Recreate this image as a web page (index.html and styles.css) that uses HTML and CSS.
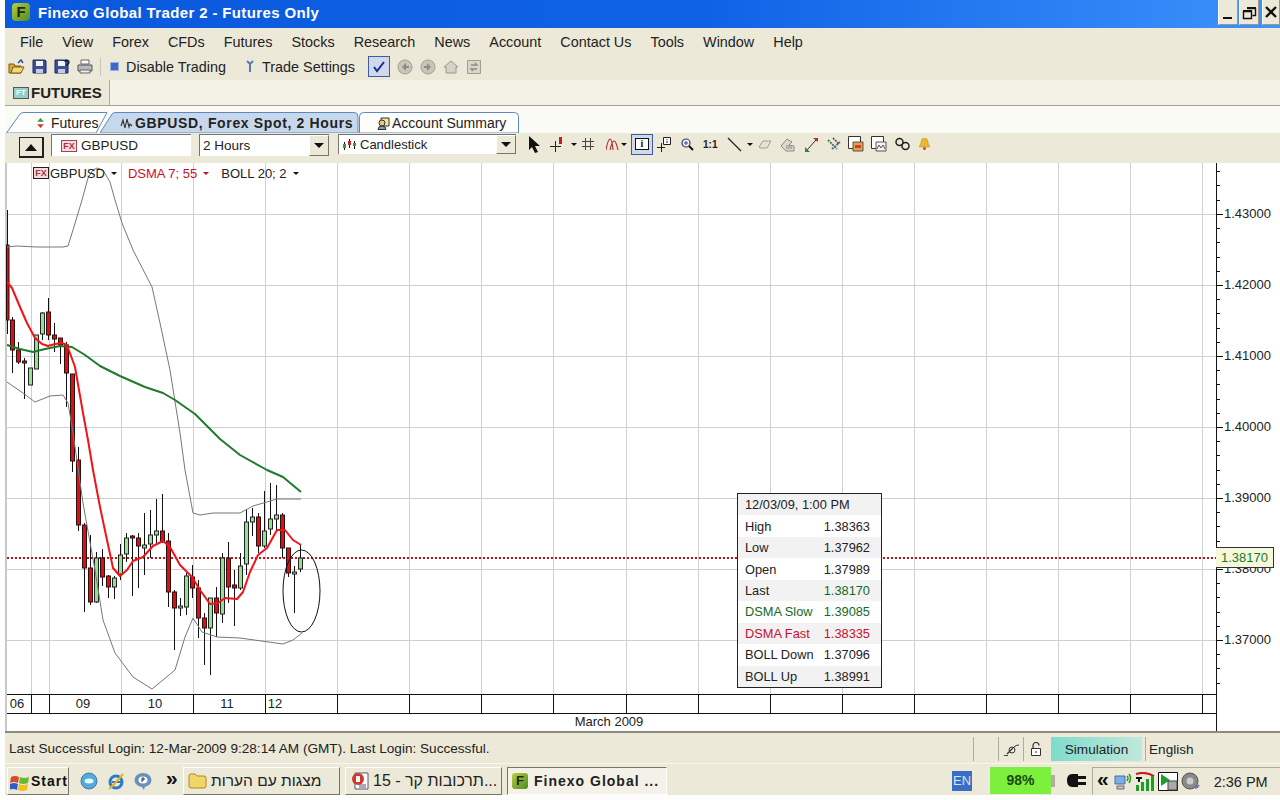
FILE: index.html
```html
<!DOCTYPE html>
<html lang="en">
<head>
<meta charset="utf-8">
<title>Finexo Global Trader 2 - Futures Only</title>
<link rel="stylesheet" href="styles.css">
</head>
<body>
<header class="titlebar">
  <span class="logo">F</span>
  <span class="title-text">Finexo Global Trader 2 - Futures Only</span>
  <div class="winbtns">
    <span class="winbtn"><svg width="20" height="24" viewBox="0 0 20 24"><path d="M5 18h9" stroke="#111" stroke-width="2"/></svg></span>
    <span class="winbtn"><svg width="20" height="24" viewBox="0 0 20 24"><path d="M8.500 8.500h8v7h-3M4.500 11.500h8v7h-8z" fill="none" stroke="#111" stroke-width="1.400"/><path d="M8 8h9M4 11h9" stroke="#111" stroke-width="2"/></svg></span>
    <span class="winbtn winbtn-x"><svg width="20" height="24" viewBox="0 0 20 24"><path d="M5 7l10 10M15 7L5 17" stroke="#111" stroke-width="2.400"/></svg></span>
  </div>
</header>

<nav class="menubar">
  <span>File</span><span>View</span><span>Forex</span><span>CFDs</span><span>Futures</span><span>Stocks</span><span>Research</span><span>News</span><span>Account</span><span>Contact Us</span><span>Tools</span><span>Window</span><span>Help</span>
</nav>

<div class="toolbar">
  <svg class="ti" width="17" height="16" viewBox="0 0 17 16"><path d="M1 5h5l1 2h6v7H1z" fill="#d9a93a" stroke="#7a5a10"/><path d="M3 14l2-6h11l-3 6z" fill="#f5d878" stroke="#7a5a10"/><path d="M10 4l3-3 2 3" fill="none" stroke="#2a4a9a" stroke-width="1.500"/></svg>
  <svg class="ti" width="15" height="15" viewBox="0 0 15 15"><path d="M1 1h12l1 1v12H1z" fill="#3c4f9e" stroke="#1e2a66"/><path d="M4 2h7v5H4z" fill="#f4f4f4"/><path d="M4 10h7v4H4z" fill="#c8ccd8"/></svg>
  <svg class="ti" width="16" height="15" viewBox="0 0 16 15"><path d="M1 1h12l1 1v12H1z" fill="#3c4f9e" stroke="#1e2a66"/><path d="M4 2h7v5H4z" fill="#f4f4f4"/><path d="M4 10h7v4H4z" fill="#c8ccd8"/><path d="M11 3a2 2 0 1 1 3 2l-1 1v1" fill="none" stroke="#111" stroke-width="1.300"/></svg>
  <svg class="ti" width="16" height="15" viewBox="0 0 16 15"><path d="M4 1h8v4H4z" fill="#fff" stroke="#666"/><path d="M1 6h14v6H1z" fill="#b8b8c0" stroke="#555"/><path d="M3 11h10v3H3z" fill="#eee" stroke="#666"/></svg>
  <span class="tsep"></span>
  <span class="bluesq"></span>
  <span class="tlabel">Disable Trading</span>
  <svg class="ti-key" width="10" height="15" viewBox="0 0 10 15"><path d="M2 2l3 3 3-3M5 5v8" fill="none" stroke="#5a7ab0" stroke-width="2"/></svg>
  <span class="tlabel">Trade Settings</span>
  <span class="checkbtn"><svg width="14" height="13" viewBox="0 0 14 13"><path d="M2 7l3 4 7-9" fill="none" stroke="#1a2a9a" stroke-width="2"/></svg></span>
  <span class="navicons">
    <svg width="16" height="16" viewBox="0 0 16 16"><circle cx="8" cy="8" r="7" fill="#c8c6ba" stroke="#a09e92"/><path d="M9 4L5 8l4 4zM9 7h3v2H9z" fill="#8e8c82"/></svg>
    <svg width="16" height="16" viewBox="0 0 16 16"><circle cx="8" cy="8" r="7" fill="#c8c6ba" stroke="#a09e92"/><path d="M7 4l4 4-4 4zM7 7H4v2h3z" fill="#8e8c82"/></svg>
    <svg width="16" height="16" viewBox="0 0 16 16"><path d="M1 8l7-6 7 6h-2v6H3V8z" fill="#d4d2c6" stroke="#9a988c"/></svg>
    <svg width="16" height="16" viewBox="0 0 16 16"><path d="M1.500 1.500h13v13h-13z" fill="#d8d6ca" stroke="#a09e92"/><path d="M5 6h6l-2-2M11 10H5l2 2" fill="none" stroke="#8e8c82" stroke-width="1.300"/></svg>
  </span>
</div>

<div class="workband">
  <div class="worktab"><span class="ft">FT</span>FUTURES</div>
</div>

<div class="tabs">
  <div class="tab tab-futures">
    <svg class="tabshape" width="102" height="21" viewBox="0 0 102 21"><path d="M0.500 21L14 2q1.500-1.500 4-1.500h83L90 21z" fill="#fdfdfb" stroke="#5a8ac0"/></svg>
    <svg class="tabicon" width="9" height="12" viewBox="0 0 11 12"><path d="M5.500 0l4 4.500h-8z" fill="#2c9a3a"/><path d="M5.500 12l4-4.500h-8z" fill="#d03030"/></svg>
    <span>Futures</span>
  </div>
  <div class="tab tab-active">
    <svg class="tabshape" width="259" height="21" viewBox="0 0 259 21"><path d="M0 21L12 2q1-1.500 4-1.500h238q4 0 4 4V21z" fill="#c8d8ec" stroke="#5a8ac0"/></svg>
    <svg class="tabicon" width="13" height="12" viewBox="0 0 13 12"><path d="M1 9l2-6 2 8 2-9 2 8 1-3 2 2" fill="none" stroke="#333" stroke-width="1.100"/></svg>
    <span>GBPUSD, Forex Spot, 2 Hours</span>
  </div>
  <div class="tab tab-account">
    <svg class="tabshape" width="161" height="21" viewBox="0 0 161 21"><path d="M0.500 21V4.500q0-4 4-4h151q4 0 4 4V21z" fill="#fdfdfb" stroke="#5a8ac0"/></svg>
    <svg class="tabicon" width="13" height="14" viewBox="0 0 13 14"><path d="M4 2h8v8H4z" fill="#f4e4a0" stroke="#333"/><circle cx="5" cy="7" r="3" fill="#e8c880" stroke="#333"/><path d="M1 13.500q0-3.500 4-3.500t4 3.500z" fill="#8898c0" stroke="#333"/></svg>
    <span>Account Summary</span>
  </div>
</div>

<div class="charttools">
  <span class="upbtn"><svg width="12" height="7" viewBox="0 0 12 7"><path d="M6 0l6 7H0z" fill="#111"/></svg></span>
  <div class="field field-symbol"><span class="fx">FX</span><span>GBPUSD</span></div>
  <div class="field field-period"><span>2 Hours</span><span class="comboarrow"><svg width="10" height="5" viewBox="0 0 10 5"><path d="M0 0h10L5 5z" fill="#111"/></svg></span></div>
  <div class="field field-type">
    <svg class="typeicon" width="15" height="14" viewBox="0 0 15 14"><path d="M2.500 4v8M7.500 1v9M12.500 3v8" stroke="#111"/><path d="M1 6h3v4H1z" fill="#3a9a3a"/><path d="M6 3h3v4H6z" fill="#d02020"/><path d="M11 5h3v3h-3z" fill="#3a9a3a"/></svg>
    <span>Candlestick</span>
    <span class="comboarrow"><svg width="10" height="5" viewBox="0 0 10 5"><path d="M0 0h10L5 5z" fill="#111"/></svg></span>
  </div>
  <div class="charticons">
    <svg class="ci-arrow" width="13" height="17" viewBox="0 0 13 17"><path d="M1 0v14l3-3 3 6 3-1-3-6h5z" fill="#111"/></svg>
    <svg class="ci-cross" width="17" height="17" viewBox="0 0 17 17"><path d="M0 10.500h11M5.500 5v11" stroke="#222"/><path d="M9 1h3v7H9z" fill="#c02020"/></svg>
    <svg class="ci-drop" width="6" height="3" viewBox="0 0 6 3"><path d="M0 0h6L3 3z" fill="#111"/></svg>
    <svg class="ci-grid" width="12" height="12" viewBox="0 0 12 12"><path d="M3.500 0v12M8.500 0v12M0 3.500h12M0 8.500h12" stroke="#444"/></svg>
    <svg class="ci-wave" width="13" height="13" viewBox="0 0 13 13"><path d="M0 12Q2 1 4 1t3 11M4 12Q6 3 8 3t4 9" fill="none" stroke="#b02828" stroke-width="1.100"/></svg>
    <svg class="ci-drop" width="6" height="3" viewBox="0 0 6 3"><path d="M0 0h6L3 3z" fill="#111"/></svg>
    <span class="infobtn"><span class="infobox">i</span></span>
    <svg class="ci-plusinfo" width="14" height="15" viewBox="0 0 14 15"><path d="M0 10.500h8M4.500 6v9" stroke="#222"/><path d="M6.500.500h7v7h-7z" fill="#fff" stroke="#222"/><path d="M9.500 2h1v1h-1zM9.500 4h1v2h-1z" fill="#222"/></svg>
    <svg class="ci-zoom" width="13" height="13" viewBox="0 0 13 13"><circle cx="5" cy="5" r="4" fill="#eef" stroke="#444" stroke-width="1.200"/><path d="M8 8l4 4" stroke="#111" stroke-width="2"/><path d="M3 5h4M5 3v4" stroke="#2a4ab0"/></svg>
    <span class="ci-ratio">1:1</span>
    <svg class="ci-line" width="15" height="15" viewBox="0 0 15 15"><path d="M1 1l13 13" stroke="#222" stroke-width="1.200"/></svg>
    <svg class="ci-drop" width="6" height="3" viewBox="0 0 6 3"><path d="M0 0h6L3 3z" fill="#111"/></svg>
    <svg class="ci-erase" width="14" height="11" viewBox="0 0 14 11"><path d="M1 8l4-6h8L9 9H2z" fill="#e6e4d8" stroke="#a09e92"/></svg>
    <svg class="ci-grey" width="16" height="15" viewBox="0 0 16 15"><path d="M1 9l6-7 5 3-3 3 5 1v5H6z" fill="#dcdace" stroke="#8e8c82"/><path d="M6 9h6M6 11h6" stroke="#8e8c82"/></svg>
    <svg class="ci-arrows" width="13" height="15" viewBox="0 0 13 15"><path d="M2 13L11 3" stroke="#333"/><path d="M8 1h5v4z" fill="#c02020"/><path d="M0 10v5h5z" fill="#2a8a3a"/></svg>
    <svg class="ci-dash" width="14" height="14" viewBox="0 0 14 14"><path d="M1 3l9 9" stroke="#2a8a3a" stroke-width="2" stroke-dasharray="2 1"/><path d="M5 12l8-7" stroke="#7a5a90" stroke-width="2" stroke-dasharray="2 1"/><path d="M6 1l6 6" stroke="#444" stroke-width="1.500" stroke-dasharray="2 1"/></svg>
    <svg class="ci-win" width="16" height="16" viewBox="0 0 16 16"><path d="M.500.500h12v12H.500z" fill="#fff" stroke="#333"/><path d="M5 6h10v9H5z" fill="#e8a040" stroke="#555"/><path d="M7 9h6v3H7z" fill="#d04030"/></svg>
    <svg class="ci-win" width="16" height="16" viewBox="0 0 16 16"><path d="M.500.500h12v12H.500z" fill="#fff" stroke="#333"/><path d="M5 6h10v9H5z" fill="#f4f4f0" stroke="#555"/><path d="M6 13l2-4 2 3 2-3 2 4" fill="none" stroke="#555"/></svg>
    <svg class="ci-links" width="15" height="14" viewBox="0 0 15 14"><circle cx="4.500" cy="5" r="3.500" fill="none" stroke="#222" stroke-width="1.500"/><circle cx="10.500" cy="9" r="3.500" fill="none" stroke="#222" stroke-width="1.500"/></svg>
    <svg class="ci-bell" width="11" height="12" viewBox="0 0 11 12"><path d="M5.500 0q3.500 0 3.500 5l2 4H0l2-4q0-5 3.500-5z" fill="#e8b830" stroke="#b08820" stroke-width=".5"/><circle cx="5.500" cy="10.500" r="1.500" fill="#c05020"/></svg>
  </div>
</div>

<main class="chart">
  <svg class="plot" width="1280" height="568" viewBox="0 163 1280 568">
    <path class="grid" d="M31.500 163V694M49.500 163V694M121.500 163V694M193.500 163V694M265.500 163V694M337.500 163V694M409.500 163V694M481.500 163V694M553.500 163V694M626.500 163V694M698.500 163V694M770.500 163V694M842.500 163V694M914.500 163V694M986.500 163V694M1058.500 163V694M1130.500 163V694M1202.500 163V694"/>
    <path class="grid" d="M7 214.500H1216M7 285.500H1216M7 356.500H1216M7 427.500H1216M7 498.500H1216M7 569.500H1216M7 640.500H1216"/>
    <path class="edge" d="M6 163V731"/>
    <path class="dotted" d="M7 558H1216"/>

    <path class="wick" d="M7.500 210V334M12.500 317V373M18.500 342V364M24.500 358V399M42.500 312V340M48.500 298V340M54.500 323V352M60.500 338V364M66.500 342V407M72.500 374V472M78.500 447V531M84.500 523V612M90.500 535V605M96.500 552V603M102.500 549V586M108.500 575V598M114.500 576V599M120.500 544V580M126.500 533V562M132.500 535V596M138.500 533V588M144.500 513V575M150.500 510V558M156.500 499V543M162.500 494V543M168.500 533V607M174.500 590V650M180.500 598V616M186.500 573V615M192.500 565V598M198.500 580V638M204.500 613V665M210.500 598V675M216.500 587V637M222.500 553V623M228.500 542V603M234.500 570V626M240.500 553V590M246.500 510V575M252.500 508V536M258.500 513V553M264.500 491V548M270.500 483V535M276.500 485V531M282.500 513V558M288.500 548V577M294.500 566V613M300.500 544V572"/>
    <g class="candle-r">
      <rect x="6.500" y="245" width="2.500" height="75"/><rect x="10.500" y="320" width="4" height="30"/><rect x="16.500" y="350" width="4" height="12"/><rect x="22.500" y="361" width="4" height="2"/><rect x="46.500" y="312" width="4" height="23"/><rect x="52.500" y="335" width="4" height="4"/><rect x="58.500" y="338" width="4" height="7"/><rect x="64.500" y="345" width="4" height="28"/><rect x="70.500" y="374" width="4" height="87"/><rect x="76.500" y="460" width="4" height="65"/><rect x="82.500" y="525" width="4" height="43"/><rect x="88.500" y="568" width="4" height="34"/><rect x="100.500" y="558" width="4" height="19"/><rect x="106.500" y="576" width="4" height="11"/><rect x="130.500" y="536" width="4" height="2"/><rect x="136.500" y="538" width="4" height="8"/><rect x="160.500" y="531" width="4" height="11"/><rect x="166.500" y="541" width="4" height="51"/><rect x="172.500" y="592" width="4" height="16"/><rect x="190.500" y="577" width="4" height="11"/><rect x="196.500" y="588" width="4" height="30"/><rect x="202.500" y="618" width="4" height="10"/><rect x="214.500" y="598" width="4" height="15"/><rect x="226.500" y="558" width="4" height="29"/><rect x="232.500" y="585" width="4" height="3"/><rect x="256.500" y="517" width="4" height="29"/><rect x="280.500" y="515" width="4" height="33"/><rect x="286.500" y="548" width="4" height="25"/>
    </g>
    <g class="candle-g">
      <rect x="28.500" y="368" width="4" height="17"/><rect x="34.500" y="335" width="4" height="34"/><rect x="40.500" y="313" width="4" height="21"/><rect x="94.500" y="558" width="4" height="44"/><rect x="112.500" y="578" width="4" height="9"/><rect x="118.500" y="555" width="4" height="19"/><rect x="124.500" y="538" width="4" height="16"/><rect x="142.500" y="545" width="4" height="3"/><rect x="148.500" y="535" width="4" height="9"/><rect x="154.500" y="531" width="4" height="4"/><rect x="178.500" y="606" width="4" height="2"/><rect x="184.500" y="576" width="4" height="31"/><rect x="208.500" y="598" width="4" height="30"/><rect x="220.500" y="558" width="4" height="56"/><rect x="238.500" y="566" width="4" height="22"/><rect x="244.500" y="522" width="4" height="42"/><rect x="250.500" y="517" width="4" height="5"/><rect x="262.500" y="531" width="4" height="15"/><rect x="268.500" y="519" width="4" height="10"/><rect x="274.500" y="515" width="4" height="4"/><rect x="292.500" y="572" width="4" height="2"/><rect x="298.500" y="558" width="4" height="11"/>
    </g>

    <polyline class="boll" points="7,247 17,246 37,247 63,247 68,246 73,230 82,200 88,178 93,170 97,168 103,170 110,182 115,200 122,223 133,250 152,287 160,323 170,370 180,433 185,470 193,513 200,515 213,513 240,513 253,506 277,499 301,499"/>
    <polyline class="boll" points="7,382 23,393 35,402 50,396 63,395 68,403 73,433 83,503 95,570 103,620 115,653 133,677 152,689 163,680 175,670 185,637 193,618 202,632 217,637 240,638 283,644 293,640 302,633"/>
    <polyline class="dsma-slow" points="7,345 20,349 33,352 45,349 60,346 72,347 85,355 100,366 120,376 145,387 163,393 175,400 195,414 220,439 240,455 267,470 283,477 301,492"/>
    <polyline class="dsma-fast" points="7,282 12,288 20,307 27,323 35,338 42,344 48,346 55,344 62,343 67,345 75,367 83,413 88,440 93,470 100,507 107,540 113,568 120,576 127,570 133,561 143,557 153,546 163,541 170,547 180,565 192,577 200,590 210,604 218,603 225,598 237,599 243,592 250,572 258,555 267,548 277,530 285,530 293,540 301,545"/>
    <ellipse class="circle" cx="301.500" cy="591" rx="18.500" ry="41"/>

    <path class="axis" d="M7 694.500H1216M7 713.500H1216M1216.500 163V731M31.500 694V713M49.500 694V713M121.500 694V713M193.500 694V713M265.500 694V713M337.500 694V713M409.500 694V713M481.500 694V713M553.500 694V713M626.500 694V713M698.500 694V713M770.500 694V713M842.500 694V713M914.500 694V713M986.500 694V713M1058.500 694V713M1130.500 694V713M1202.500 694V713"/>
    <path class="axis" d="M1216 171.500h4M1216 185.500h4M1216 200.500h4M1216 214.500h7M1216 228.500h4M1216 242.500h4M1216 257.500h4M1216 271.500h4M1216 285.500h7M1216 299.500h4M1216 313.500h4M1216 328.500h4M1216 342.500h4M1216 356.500h7M1216 370.500h4M1216 384.500h4M1216 399.500h4M1216 413.500h4M1216 427.500h7M1216 441.500h4M1216 455.500h4M1216 470.500h4M1216 484.500h4M1216 498.500h7M1216 512.500h4M1216 526.500h4M1216 541.500h4M1216 555.500h4M1216 569.500h7M1216 583.500h4M1216 597.500h4M1216 612.500h4M1216 626.500h4M1216 640.500h7M1216 654.500h4M1216 668.500h4M1216 683.500h4"/>

    <g class="ylabels">
      <text x="1224" y="218">1.43000</text><text x="1224" y="289">1.42000</text><text x="1224" y="360">1.41000</text><text x="1224" y="431">1.40000</text><text x="1224" y="502">1.39000</text><text x="1224" y="573">1.38000</text><text x="1224" y="644">1.37000</text>
    </g>
    <g class="xlabels">
      <text x="17" y="708">06</text><text x="83" y="708">09</text><text x="155" y="708">10</text><text x="227" y="708">11</text><text x="275" y="708">12</text><text x="609" y="726">March 2009</text>
    </g>
  </svg>

  <div class="legend">
    <span class="fx fx-legend">FX</span><span class="lg-sym">GBPUSD</span><i class="drop"></i>
    <span class="lg-red">DSMA 7; 55</span><i class="drop drop-red"></i>
    <span class="lg-boll">BOLL 20; 2</span><i class="drop"></i>
  </div>

  <div class="pricetag">1.38170</div>

  <div class="tip">
    <div class="tip-row"><span>12/03/09, 1:00 PM</span></div>
    <div class="tip-row"><span>High</span><span>1.38363</span></div>
    <div class="tip-row"><span>Low</span><span>1.37962</span></div>
    <div class="tip-row"><span>Open</span><span>1.37989</span></div>
    <div class="tip-row"><span>Last</span><span class="tip-green">1.38170</span></div>
    <div class="tip-row tip-green"><span>DSMA Slow</span><span>1.39085</span></div>
    <div class="tip-row tip-red"><span>DSMA Fast</span><span>1.38335</span></div>
    <div class="tip-row"><span>BOLL Down</span><span>1.37096</span></div>
    <div class="tip-row"><span>BOLL Up</span><span>1.38991</span></div>
  </div>
</main>

<footer class="statusbar">
  <span class="status-msg">Last Successful Login: 12-Mar-2009 9:28:14 AM (GMT). Last Login: Successful.</span>
  <span class="st-cell st-empty"></span>
  <span class="st-cell"><svg width="17" height="13" viewBox="0 0 17 13"><path d="M1 12.500h4" stroke="#444"/><path d="M4 11l6-6" stroke="#333" stroke-width="1.200"/><circle cx="9" cy="7" r="3" fill="none" stroke="#333"/><path d="M11 4q2-2 5-2" fill="none" stroke="#333"/></svg></span>
  <span class="st-cell"><svg width="12" height="14" viewBox="0 0 12 14"><path d="M1.500 6.500h9v7h-9z" fill="#fff" stroke="#333"/><path d="M3 6V3.500a3 3 0 0 1 6 0" fill="none" stroke="#333" stroke-width="1.200"/><path d="M5.500 9h1v2h-1z" fill="#333"/></svg></span>
  <span class="sim">Simulation</span>
  <span class="lang">English</span>
</footer>

<div class="taskbar">
  <span class="start">
    <svg width="20" height="19" viewBox="0 0 20 19"><path d="M1 5q4-2 8 0l-1 6q-4-2-8 0z" fill="#d8482a"/><path d="M10 5q4 2 9 0l-1 6q-5 2-9 0z" fill="#6ab82e"/><path d="M0 12q4-2 8 0l-1 6q-4-2-8 0z" fill="#2a5fc8"/><path d="M9 12q4 2 9 0l-1 6q-5 2-9 0z" fill="#f2c01e"/></svg>
    <span>Start</span>
  </span>
  <span class="quick">
    <svg width="18" height="18" viewBox="0 0 18 18"><circle cx="9" cy="9" r="8" fill="#58a8d8" stroke="#3a80b0"/><ellipse cx="9" cy="9" rx="4.500" ry="2.500" fill="#dff"/></svg>
    <svg width="18" height="19" viewBox="0 0 18 19"><circle cx="9" cy="10" r="6" fill="none" stroke="#2a7ad0" stroke-width="3"/><path d="M5 10h9" stroke="#2a7ad0" stroke-width="2"/><path d="M2 17Q6 14 16 2" fill="none" stroke="#e8b020" stroke-width="2"/></svg>
    <svg width="18" height="18" viewBox="0 0 18 18"><ellipse cx="9" cy="8" rx="8.500" ry="7" fill="#6a90c0"/><ellipse cx="9" cy="8" rx="4.500" ry="3.500" fill="#fff"/><path d="M7 14l3 4 1-4z" fill="#6a90c0"/><path d="M8 6v4M8 6h2v2H8" fill="none" stroke="#334"/></svg>
    <span class="chev">»</span>
  </span>
  <span class="taskbtn">
    <svg width="19" height="16" viewBox="0 0 19 16"><path d="M1 3q0-2 2-2h4l2 2h7q2 0 2 2v8q0 2-2 2H3q-2 0-2-2z" fill="#f4d668" stroke="#a88820"/></svg>
    <span class="he">מצגות עם הערות</span>
  </span>
  <span class="taskbtn">
    <svg width="19" height="18" viewBox="0 0 19 18"><path d="M5 1h13v16H5z" fill="#fff" stroke="#557"/><circle cx="8" cy="7" r="6" fill="#d03a2a"/><path d="M6 4h4v6H6z" fill="#fff"/><path d="M9 13h7M9 15h7" stroke="#557"/></svg>
    <span class="he he-wide">15 - תרכובות קר...</span>
  </span>
  <span class="taskbtn taskbtn-on">
    <span class="logo logo-small">F</span>
    <span class="task-bold">Finexo Global ...</span>
  </span>
  <span class="tray-en">EN</span>
  <span class="battery">98%</span>
  <span class="batnub"></span>
  <svg class="plug" width="21" height="17" viewBox="0 0 21 17"><path d="M6 2h6v13H6q-5 0-5-6.500T6 2z" fill="#111"/><path d="M12 4h8v3h-8zM12 10h8v3h-8z" fill="#111"/></svg>
  <div class="tray">
    <span class="chev">«</span>
    <svg width="18" height="18" viewBox="0 0 18 18"><path d="M1 3h10v8H1z" fill="#7ab0e8" stroke="#4a6a9a"/><path d="M3 13h7v3H3z" fill="#c8c8d0" stroke="#667"/><path d="M13 3q2 2 0 5M15 1q3 4 0 9" fill="none" stroke="#28a028" stroke-width="1.500"/></svg>
    <svg width="20" height="19" viewBox="0 0 20 19"><path d="M1 2q9-3 18 2" fill="none" stroke="#c02020" stroke-width="2"/><path d="M1 13h3v6H1zM6 10h3v9H6zM11 7h3v12h-3zM16 4h3v15h-3z" fill="#18a028"/><path d="M1 6h6M4 6v4" stroke="#111" stroke-width="2"/></svg>
    <svg width="20" height="19" viewBox="0 0 20 19"><path d="M.500.500h19v18H.500z" fill="#fff" stroke="#111"/><path d="M3 2l9 6-9 6z" fill="#18a028"/><path d="M10 9h9v9h-9z" fill="#aaa" stroke="#444"/></svg>
    <svg width="19" height="19" viewBox="0 0 19 19"><circle cx="9" cy="9" r="8" fill="#8a8a8a" stroke="#555"/><circle cx="9" cy="9" r="3.500" fill="#ccc"/><path d="M14 16q3-1 4-3" fill="none" stroke="#6a78b0" stroke-width="2"/></svg>
    <span class="clock">2:36 PM</span>
  </div>
</div>
</body>
</html>
```

FILE: styles.css
```css
* { box-sizing: border-box; }
html, body { margin: 0; padding: 0; }
body {
  width: 1280px;
  height: 800px;
  overflow: hidden;
  background: #fdfdfb;
  font-family: "Liberation Sans", Arial, sans-serif;
  font-size: 14px;
  color: #222;
  display: flex;
  flex-direction: column;
}
svg { display: block; flex: none; }

.titlebar {
  height: 28px;
  margin-left: 5px;
  display: flex;
  align-items: center;
  padding: 0 0 4px 7px;
  background: linear-gradient(90deg, #0a58dc 0%, #0f62e6 55%, #3d92fc 100%);
}
.logo {
  width: 18px;
  height: 18px;
  border-radius: 4px;
  background: linear-gradient(135deg, #b8d040, #4e8a24);
  color: #1a2a10;
  font: bold 15px/18px "Liberation Sans", sans-serif;
  text-align: center;
  flex: none;
}
.title-text {
  margin-left: 8px;
  color: #fff;
  font-weight: bold;
  font-size: 15px;
  letter-spacing: 0.37px;
}
.winbtns { margin-left: auto; display: flex; align-self: flex-start; gap: 1px; }
.winbtn {
  width: 20px;
  height: 25px;
  background: #ece9d8;
  border-left: 1px solid #fff;
  border-right: 1px solid #9a9888;
  border-bottom: 1px solid #9a9888;
  display: flex;
  justify-content: center;
}
.winbtn-x { margin-left: 2px; width: 18px; }

.menubar {
  height: 27px;
  margin-left: 5px;
  padding-left: 15px;
  display: flex;
  align-items: center;
  gap: 19px;
  background: #ece9d8;
  font-size: 14.400px;
}

.toolbar {
  height: 25px;
  margin-left: 5px;
  padding: 0 0 2px 3px;
  display: flex;
  align-items: center;
  background: #ece9d8;
}
.ti { margin-right: 7px; }
.tsep { width: 1px; height: 18px; background: #c8c6b6; margin: 0 9px 0 0; }
.bluesq {
  width: 9px;
  height: 9px;
  background: #3f68c8;
  border: 1px solid #9ab0e0;
  margin-right: 7px;
}
.tlabel { font-size: 14.400px; white-space: nowrap; }
.ti-key { margin: 0 7px 0 19px; }
.checkbtn {
  width: 22px;
  height: 21px;
  margin-left: 13px;
  background: #d0d8ec;
  border: 1px solid #3a5ca8;
  display: flex;
  align-items: center;
  justify-content: center;
}
.navicons { display: flex; gap: 7px; margin-left: 7px; }

.workband {
  height: 26px;
  margin-left: 5px;
  background: #f3f1e6;
  border-bottom: 1px solid #a6a498;
}
.worktab {
  width: 105px;
  height: 25px;
  padding-left: 8px;
  display: flex;
  align-items: center;
  gap: 2px;
  background: #ece9d8;
  border-right: 1px solid #b0ae9e;
  font-weight: bold;
  font-size: 15px;
  color: #222;
}
.ft {
  width: 16px;
  height: 12px;
  background: #8fd0c8;
  border: 1px solid #555;
  color: #fff;
  font: bold 8px/10px "Liberation Sans", sans-serif;
  text-align: center;
}

.tabs {
  height: 27px;
  margin-left: 5px;
  display: flex;
  align-items: flex-end;
  background: #fbfbf6;
  padding-left: 1px;
  font-size: 14px;
}
.tab { position: relative; height: 21px; display: flex; align-items: center; flex: none; }
.tab > span { position: relative; white-space: nowrap; }
.tabshape { position: absolute; left: 0; top: 0; }
.tabicon { position: relative; }
.tab-futures { width: 94px; padding-left: 30px; gap: 6px; }
.tab-active { width: 258px; padding-left: 20px; gap: 2px; font-weight: bold; font-size: 14px; letter-spacing: 0.65px; color: #222; z-index: 1; }
.tab-account { width: 161px; margin-left: 1px; padding-left: 18px; gap: 2px; }

.charttools {
  height: 30px;
  margin-left: 5px;
  padding-left: 14px;
  display: flex;
  align-items: flex-start;
  background: #ece9d8;
}
.upbtn {
  width: 25px;
  height: 21px;
  margin-top: 4px;
  border: 1px solid #222;
  border-right-width: 2px;
  border-bottom-width: 2px;
  background: #ece9d8;
  display: flex;
  align-items: center;
  justify-content: center;
}
.field {
  height: 22px;
  margin-top: 1px;
  background: #fff;
  border-top: 1px solid #77756a;
  border-left: 1px solid #77756a;
  display: flex;
  align-items: center;
  font-size: 13.500px;
  flex: none;
}
.field-symbol { width: 140px; margin-left: 7px; padding-left: 9px; gap: 4px; }
.field-period { width: 130px; margin-left: 8px; padding-left: 3px; }
.field-type { width: 178px; height: 20px; margin-left: 9px; padding-left: 3px; font-size: 13px; }
.typeicon { margin-right: 3px; }
.comboarrow {
  margin-left: auto;
  width: 20px;
  height: 100%;
  background: #ece9d8;
  border: 1px solid #fff;
  border-right-color: #77756a;
  border-bottom-color: #77756a;
  display: flex;
  align-items: center;
  justify-content: center;
}
.fx {
  width: 16px;
  height: 12px;
  flex: none;
  background: #f4dcdc;
  border: 1px solid #a84050;
  color: #a83040;
  font: bold 9px/10px "Liberation Sans", sans-serif;
  text-align: center;
}
.charticons { margin-left: 12px; display: flex; align-items: center; height: 22px; }
.ci-arrow { margin-right: 9px; }
.ci-cross { margin-right: 3px; }
.ci-drop { margin-left: 1px; margin-right: 5px; }
.ci-grid { margin-right: 12px; }
.ci-wave { margin-right: 1px; }
.infobtn {
  width: 22px;
  height: 21px;
  margin-left: -1px;
  margin-right: 4px;
  background: #d0d8ec;
  border: 1px solid #3a5ca8;
  display: flex;
  align-items: center;
  justify-content: center;
}
.infobox {
  width: 14px;
  height: 12px;
  background: #fff;
  border: 1px solid #111;
  font: bold 10px/10px "Liberation Serif", serif;
  text-align: center;
  color: #111;
}
.ci-plusinfo { margin-right: 10px; }
.ci-zoom { margin-right: 9px; }
.ci-ratio { width: 13px; font-weight: bold; font-size: 10px; color: #222; margin-right: 11px; white-space: nowrap; }
.ci-line { margin-right: 4px; }
.ci-erase { margin-right: 8px; }
.ci-grey { margin-right: 9px; }
.ci-arrows { margin-right: 9px; }
.ci-dash { margin-right: 7px; }
.ci-win { margin-right: 7px; }
.ci-links { margin: 0 9px 0 1px; }

.chart {
  position: relative;
  height: 568px;
  background: #fff;
}
.grid { stroke: #cfcfcf; fill: none; }
.edge { stroke: #c8c8c8; stroke-width: 2; }
.dotted { stroke: #c81010; stroke-width: 2; stroke-dasharray: 2 2; }
.wick { stroke: #111; fill: none; }
.candle-r rect { fill: #dc1010; stroke: #2a1010; }
.candle-g rect { fill: #94e094; stroke: #222; }
.boll { fill: none; stroke: #777; stroke-width: 1; stroke-linejoin: round; }
.dsma-slow { fill: none; stroke: #1e7a2c; stroke-width: 2; stroke-linejoin: round; }
.dsma-fast { fill: none; stroke: #f01418; stroke-width: 2; stroke-linejoin: round; }
.circle { fill: none; stroke: #111; stroke-width: 1; }
.axis { stroke: #111; fill: none; }
.ylabels text { font-size: 13px; fill: #222; }
.xlabels text { font-size: 13px; fill: #222; text-anchor: middle; }

.legend {
  position: absolute;
  left: 33px;
  top: 2px;
  height: 16px;
  display: flex;
  align-items: center;
  font-size: 13px;
  white-space: nowrap;
}
.fx-legend { border-color: #222; }
.lg-sym { margin-left: 1px; }
.lg-red { color: #c8102e; margin-left: 11px; }
.lg-boll { margin-left: 12px; }
.drop {
  width: 0;
  height: 0;
  margin-left: 6px;
  border: 3px solid transparent;
  border-top: 3px solid #111;
  border-bottom: 0;
}
.drop-red { border-top-color: #c8102e; }

.pricetag {
  position: absolute;
  left: 1216px;
  top: 384px;
  width: 58px;
  height: 21px;
  background: #f6f8dc;
  border: 1px solid #333;
  border-left: 0;
  color: #1a7a2a;
  font-size: 13px;
  line-height: 19px;
  text-align: center;
}

.tip {
  position: absolute;
  left: 737px;
  top: 330px;
  width: 145px;
  height: 195px;
  background: #fff;
  border: 1px solid #222;
  font-size: 12.800px;
  display: flex;
  flex-direction: column;
}
.tip-row {
  flex: 1;
  padding: 0 11px 0 7px;
  display: flex;
  align-items: center;
  justify-content: space-between;
  white-space: nowrap;
}
.tip-row:nth-child(odd) { background: #f2f2f2; }
.tip-green { color: #126a1e; }
.tip-red { color: #c8102e; }

.statusbar {
  height: 32px;
  margin-left: 5px;
  padding-top: 1px;
  background: #ece9d8;
  border-top: 2px solid #8e8c80;
  display: flex;
  align-items: stretch;
  font-size: 13.600px;
}
.status-msg { padding-left: 4px; align-self: center; white-space: nowrap; flex: 1; }
.st-cell {
  width: 25px;
  margin: 3px 0 2px;
  border-left: 1px solid #aeac9c;
  display: flex;
  align-items: center;
  justify-content: center;
}
.sim {
  width: 91px;
  margin: 3px 3px 2px 3px;
  background: linear-gradient(90deg, #7fdccc, #c0e8dc);
  display: flex;
  align-items: center;
  justify-content: center;
  color: #222;
}
.lang {
  width: 135px;
  margin: 3px 0 2px;
  padding-left: 3px;
  border-left: 1px solid #aeac9c;
  display: flex;
  align-items: center;
}

.taskbar {
  height: 36px;
  margin-left: 5px;
  padding: 3px 0 0 2px;
  display: flex;
  align-items: flex-start;
  background: linear-gradient(#ece9d8 0, #ece9d8 31px, #fdfdfb 31px);
  border-top: 1px solid #f8f6ee;
}
.start {
  width: 62px;
  height: 28px;
  display: flex;
  align-items: center;
  padding-left: 2px;
  gap: 1px;
  background: #ece9d8;
  border: 1px solid #fff;
  border-right-color: #77756a;
  border-bottom-color: #77756a;
  font-weight: bold;
  font-size: 14px;
  letter-spacing: 1px;
  color: #111;
}
.quick { width: 114px; height: 28px; display: flex; align-items: center; gap: 9px; padding-left: 11px; }
.chev { font-weight: bold; font-size: 21px; line-height: 18px; color: #111; margin-left: 5px; margin-top: -6px; }
.taskbtn {
  width: 157px;
  height: 28px;
  margin-right: 5px;
  flex: none;
  display: flex;
  align-items: center;
  gap: 4px;
  padding-left: 4px;
  background: #ece9d8;
  border: 1px solid #fff;
  border-right-color: #77756a;
  border-bottom-color: #77756a;
  font-size: 14px;
  white-space: nowrap;
  overflow: hidden;
}
.he { font-family: "Liberation Sans", "DejaVu Sans", sans-serif; font-size: 15.500px; }
.he-wide { font-size: 16px; }
.taskbtn-on {
  width: 160px;
  gap: 6px;
  background: #f4f2e8;
  border-color: #77756a #fff #fff #77756a;
}
.logo-small { width: 16px; height: 16px; font-size: 13px; line-height: 16px; border-radius: 3px; }
.task-bold { font-weight: bold; letter-spacing: 1px; }
.tray-en {
  width: 20px;
  height: 20px;
  margin: 4px 0 0 280px;
  background: #3a6ec4;
  color: #d8e4f8;
  font-size: 13px;
  line-height: 20px;
  text-align: center;
}
.battery {
  width: 61px;
  height: 27px;
  margin-left: 18px;
  background: #7cf03c;
  color: #1a4a10;
  font-weight: bold;
  font-size: 14px;
  line-height: 27px;
  text-align: center;
}
.batnub { width: 4px; height: 12px; margin-top: 8px; background: #b0ae9e; }
.plug { margin: 5px 0 0 11px; }
.tray {
  height: 28px;
  margin-left: 5px;
  flex: 1;
  display: flex;
  align-items: center;
  padding-left: 1px;
  border-left: 1px solid #aeac9c;
  border-top: 1px solid #aeac9c;
  gap: 3px;
}
.tray .chev { margin: -6px 2px 0 3px; }
.clock { margin-left: 11px; font-size: 14.500px; white-space: nowrap; }
```
